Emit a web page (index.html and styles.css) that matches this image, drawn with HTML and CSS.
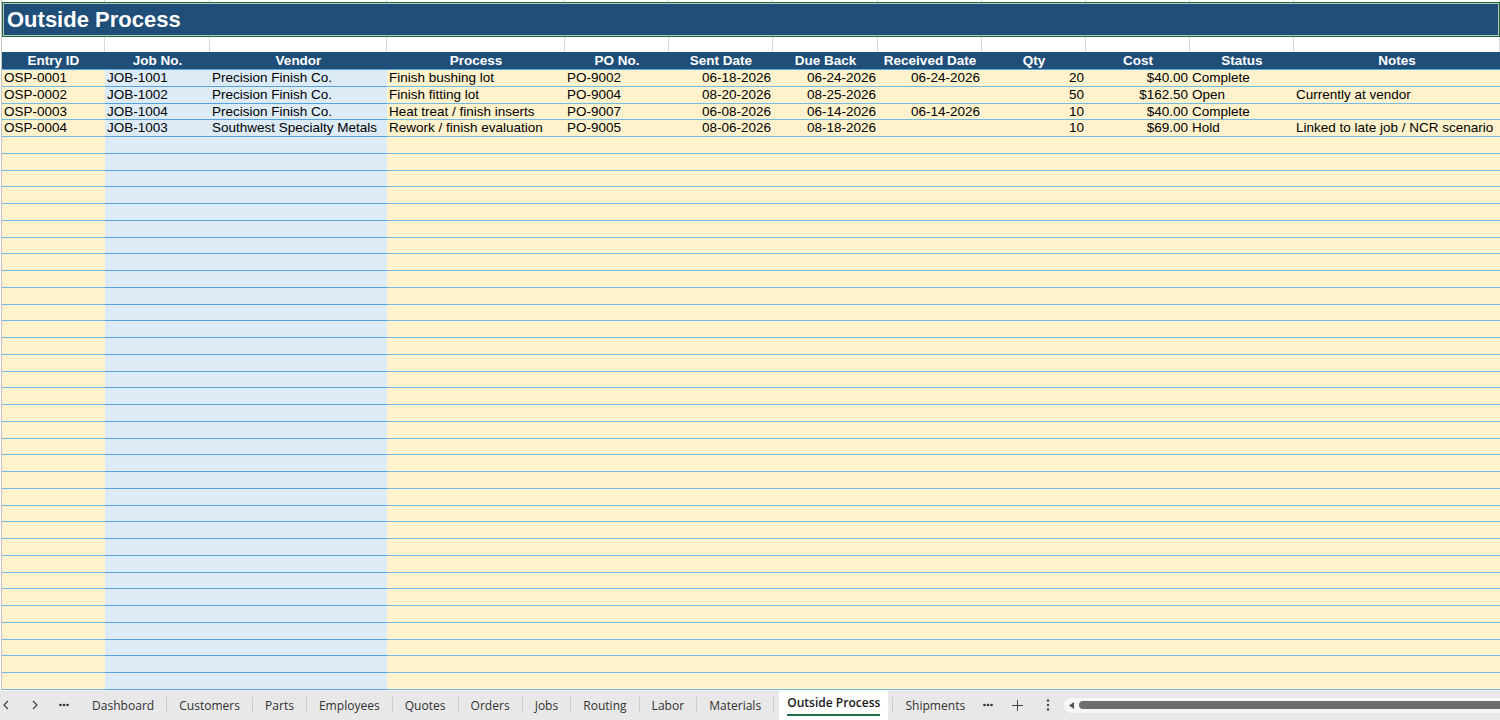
FILE: index.html
```html
<!DOCTYPE html>
<html lang="en">
<head>
<meta charset="utf-8">
<title>Outside Process</title>
<link rel="stylesheet" href="styles.css">
</head>
<body>
<div class="sheet">
  <div class="row strip">
    <div class="g"></div><div class="g"></div><div class="g"></div><div class="g"></div><div class="g"></div><div class="g"></div><div class="g"></div><div class="g"></div><div class="g"></div><div class="g"></div><div class="g"></div><div class="g"></div>
  </div>
  <div class="title">Outside Process</div>
  <div class="row blank">
    <div class="g"></div><div class="g"></div><div class="g"></div><div class="g"></div><div class="g"></div><div class="g"></div><div class="g"></div><div class="g"></div><div class="g"></div><div class="g"></div><div class="g"></div><div class="g"></div>
  </div>
  <div class="row hdr">
    <div class="h">Entry ID</div><div class="h">Job No.</div><div class="h">Vendor</div><div class="h">Process</div><div class="h">PO No.</div><div class="h">Sent Date</div><div class="h">Due Back</div><div class="h">Received Date</div><div class="h">Qty</div><div class="h">Cost</div><div class="h">Status</div><div class="h">Notes</div>
  </div>
  <div class="row d">
    <div class="c y">OSP-0001</div><div class="c b">JOB-1001</div><div class="c b">Precision Finish Co.</div><div class="c y">Finish bushing lot</div><div class="c y">PO-9002</div><div class="c y r">06-18-2026</div><div class="c y r">06-24-2026</div><div class="c y r">06-24-2026</div><div class="c y r">20</div><div class="c y r">$40.00</div><div class="c y">Complete</div><div class="c y"></div>
  </div>
  <div class="row d">
    <div class="c y">OSP-0002</div><div class="c b">JOB-1002</div><div class="c b">Precision Finish Co.</div><div class="c y">Finish fitting lot</div><div class="c y">PO-9004</div><div class="c y r">08-20-2026</div><div class="c y r">08-25-2026</div><div class="c y r"></div><div class="c y r">50</div><div class="c y r">$162.50</div><div class="c y">Open</div><div class="c y">Currently at vendor</div>
  </div>
  <div class="row d">
    <div class="c y">OSP-0003</div><div class="c b">JOB-1004</div><div class="c b">Precision Finish Co.</div><div class="c y">Heat treat / finish inserts</div><div class="c y">PO-9007</div><div class="c y r">06-08-2026</div><div class="c y r">06-14-2026</div><div class="c y r">06-14-2026</div><div class="c y r">10</div><div class="c y r">$40.00</div><div class="c y">Complete</div><div class="c y"></div>
  </div>
  <div class="row d">
    <div class="c y">OSP-0004</div><div class="c b">JOB-1003</div><div class="c b">Southwest Specialty Metals</div><div class="c y">Rework / finish evaluation</div><div class="c y">PO-9005</div><div class="c y r">08-06-2026</div><div class="c y r">08-18-2026</div><div class="c y r"></div><div class="c y r">10</div><div class="c y r">$69.00</div><div class="c y">Hold</div><div class="c y">Linked to late job / NCR scenario</div>
  </div>
  <div class="row d"><div class="c y"></div><div class="c b span2"></div><div class="c y rest"></div></div>
  <div class="row d"><div class="c y"></div><div class="c b span2"></div><div class="c y rest"></div></div>
  <div class="row d"><div class="c y"></div><div class="c b span2"></div><div class="c y rest"></div></div>
  <div class="row d"><div class="c y"></div><div class="c b span2"></div><div class="c y rest"></div></div>
  <div class="row d"><div class="c y"></div><div class="c b span2"></div><div class="c y rest"></div></div>
  <div class="row d"><div class="c y"></div><div class="c b span2"></div><div class="c y rest"></div></div>
  <div class="row d"><div class="c y"></div><div class="c b span2"></div><div class="c y rest"></div></div>
  <div class="row d"><div class="c y"></div><div class="c b span2"></div><div class="c y rest"></div></div>
  <div class="row d"><div class="c y"></div><div class="c b span2"></div><div class="c y rest"></div></div>
  <div class="row d"><div class="c y"></div><div class="c b span2"></div><div class="c y rest"></div></div>
  <div class="row d"><div class="c y"></div><div class="c b span2"></div><div class="c y rest"></div></div>
  <div class="row d"><div class="c y"></div><div class="c b span2"></div><div class="c y rest"></div></div>
  <div class="row d"><div class="c y"></div><div class="c b span2"></div><div class="c y rest"></div></div>
  <div class="row d"><div class="c y"></div><div class="c b span2"></div><div class="c y rest"></div></div>
  <div class="row d"><div class="c y"></div><div class="c b span2"></div><div class="c y rest"></div></div>
  <div class="row d"><div class="c y"></div><div class="c b span2"></div><div class="c y rest"></div></div>
  <div class="row d"><div class="c y"></div><div class="c b span2"></div><div class="c y rest"></div></div>
  <div class="row d"><div class="c y"></div><div class="c b span2"></div><div class="c y rest"></div></div>
  <div class="row d"><div class="c y"></div><div class="c b span2"></div><div class="c y rest"></div></div>
  <div class="row d"><div class="c y"></div><div class="c b span2"></div><div class="c y rest"></div></div>
  <div class="row d"><div class="c y"></div><div class="c b span2"></div><div class="c y rest"></div></div>
  <div class="row d"><div class="c y"></div><div class="c b span2"></div><div class="c y rest"></div></div>
  <div class="row d"><div class="c y"></div><div class="c b span2"></div><div class="c y rest"></div></div>
  <div class="row d"><div class="c y"></div><div class="c b span2"></div><div class="c y rest"></div></div>
  <div class="row d"><div class="c y"></div><div class="c b span2"></div><div class="c y rest"></div></div>
  <div class="row d"><div class="c y"></div><div class="c b span2"></div><div class="c y rest"></div></div>
  <div class="row d"><div class="c y"></div><div class="c b span2"></div><div class="c y rest"></div></div>
  <div class="row d"><div class="c y"></div><div class="c b span2"></div><div class="c y rest"></div></div>
  <div class="row d"><div class="c y"></div><div class="c b span2"></div><div class="c y rest"></div></div>
  <div class="row d"><div class="c y"></div><div class="c b span2"></div><div class="c y rest"></div></div>
  <div class="row d"><div class="c y"></div><div class="c b span2"></div><div class="c y rest"></div></div>
  <div class="row d"><div class="c y"></div><div class="c b span2"></div><div class="c y rest"></div></div>
  <div class="row d"><div class="c y"></div><div class="c b span2"></div><div class="c y rest"></div></div>
</div>
<div class="tabbar">
  <span class="ico prev"><svg width="6" height="10" viewBox="0 0 6 10"><polyline points="5,1 1,5 5,9" fill="none" stroke="#444" stroke-width="1.2"/></svg></span>
  <span class="ico next"><svg width="6" height="10" viewBox="0 0 6 10"><polyline points="1,1 5,5 1,9" fill="none" stroke="#444" stroke-width="1.2"/></svg></span>
  <span class="ico more"><svg width="10" height="4" viewBox="0 0 10 4"><circle cx="1.5" cy="2" r="1.3" fill="#333"/><circle cx="5" cy="2" r="1.3" fill="#333"/><circle cx="8.5" cy="2" r="1.3" fill="#333"/></svg></span>
  <span class="tab">Dashboard</span><span class="sep"></span>
  <span class="tab">Customers</span><span class="sep"></span>
  <span class="tab">Parts</span><span class="sep"></span>
  <span class="tab">Employees</span><span class="sep"></span>
  <span class="tab">Quotes</span><span class="sep"></span>
  <span class="tab">Orders</span><span class="sep"></span>
  <span class="tab">Jobs</span><span class="sep"></span>
  <span class="tab">Routing</span><span class="sep"></span>
  <span class="tab">Labor</span><span class="sep"></span>
  <span class="tab">Materials</span><span class="sep"></span>
  <span class="tab active"><span class="lbl">Outside Process</span></span><span class="sep"></span>
  <span class="tab">Shipments</span>
  <span class="ico more2"><svg width="10" height="4" viewBox="0 0 10 4"><circle cx="1.5" cy="2" r="1.3" fill="#333"/><circle cx="5" cy="2" r="1.3" fill="#333"/><circle cx="8.5" cy="2" r="1.3" fill="#333"/></svg></span>
  <span class="ico plus"><svg width="11" height="11" viewBox="0 0 11 11"><line x1="5.5" y1="0" x2="5.5" y2="11" stroke="#444" stroke-width="1"/><line x1="0" y1="5.5" x2="11" y2="5.5" stroke="#444" stroke-width="1"/></svg></span>
  <span class="ico kebab"><svg width="4" height="12" viewBox="0 0 4 12"><circle cx="2" cy="1.5" r="1.2" fill="#444"/><circle cx="2" cy="6" r="1.2" fill="#444"/><circle cx="2" cy="10.5" r="1.2" fill="#444"/></svg></span>
  <div class="hscroll">
    <svg class="larrow" width="5" height="7" viewBox="0 0 5 7"><polygon points="5,0 0,3.5 5,7" fill="#555"/></svg>
    <div class="thumb"></div>
  </div>
</div>
</body>
</html>
```

FILE: styles.css
```css
* { box-sizing: border-box; }

html, body {
  margin: 0;
  padding: 0;
}

body {
  width: 1500px;
  height: 720px;
  overflow: hidden;
  display: flex;
  flex-direction: column;
  background: #ffffff;
  font-family: "Liberation Sans", Arial, sans-serif;
  color: #000;
}

.sheet {
  --cols: 103px 105px 177px 178px 104px 104px 105px 104px 104px 104px 104px 1fr;
  margin-left: 1px;
  border-left: 1px solid #c4c4c4;
  overflow: hidden;
  flex: none;
}

.row {
  display: grid;
  grid-template-columns: var(--cols);
}

.strip { height: 2px; }
.blank { height: 15px; }

.g {
  border-right: 1px solid #d9d9d9;
  background: #fff;
}

.title {
  height: 35px;
  background: #1f4e78;
  border: 1px solid #1b6a3c;
  box-shadow: inset 0 0 0 1px #b9c7bd;
  color: #fff;
  font-weight: bold;
  font-size: 22px;
  line-height: 33px;
  padding-left: 4px;
  white-space: nowrap;
}

.hdr {
  height: 18px;
  background: #1f4e78;
  border-bottom: 1px solid #5aa8da;
}

.h {
  color: #fff;
  font-weight: bold;
  font-size: 13.5px;
  line-height: 17px;
  text-align: center;
  white-space: nowrap;
  overflow: hidden;
}

.d { height: 16.75px; }

.c {
  font-size: 13.5px;
  line-height: 15.75px;
  padding: 0 3px 0 2px;
  white-space: nowrap;
  overflow: hidden;
  border-bottom: 1px solid;
}

.y {
  background: #fff2cc;
  border-bottom-color: #74bce6;
}

.b {
  background: #ddebf7;
  border-bottom-color: #55a2dc;
}

.r {
  text-align: right;
  padding-right: 2px;
}

.span2 { grid-column: span 2; }
.rest { grid-column: span 9; }

/* Sheet tab bar */
.tabbar {
  flex: 1;
  display: flex;
  align-items: stretch;
  background: #e8e8e8;
  border-top: 1px solid #f2f2f2;
  padding-left: 3px;
  font-family: "Open Sans", "Noto Sans", sans-serif;
  font-size: 12.05px;
  color: #333;
}

.ico {
  display: flex;
  align-items: center;
  flex: none;
}

.prev { margin-right: 23px; }
.next { margin-right: 21px; }
.more { margin-right: 11px; }
.more2 { margin-left: 6px; margin-right: 19px; }
.plus { margin-right: 23px; }
.kebab { margin-right: 14px; }

.tab {
  display: flex;
  align-items: center;
  padding: 0 12px;
  white-space: nowrap;
  flex: none;
}

.sep {
  width: 1px;
  height: 16px;
  align-self: center;
  background: #cacaca;
  flex: none;
}

.tab.active {
  background: #ffffff;
  padding: 0 8px;
  margin: 0 4px 0 5px;
  color: #1a1a1a;
  font-weight: 600;
}

.tab.active .lbl {
  padding-bottom: 3px;
  border-bottom: 2px solid #1e7145;
  line-height: 16px;
}

.hscroll {
  flex: 1;
  height: 15px;
  align-self: center;
  background: #f7f7f7;
  border-radius: 8px 0 0 8px;
  display: flex;
  align-items: center;
  padding-left: 5px;
}

.larrow {
  flex: none;
  margin-right: 5px;
}

.thumb {
  flex: 1;
  height: 8px;
  background: #6d6d6d;
  border-radius: 4px 0 0 4px;
}
```
